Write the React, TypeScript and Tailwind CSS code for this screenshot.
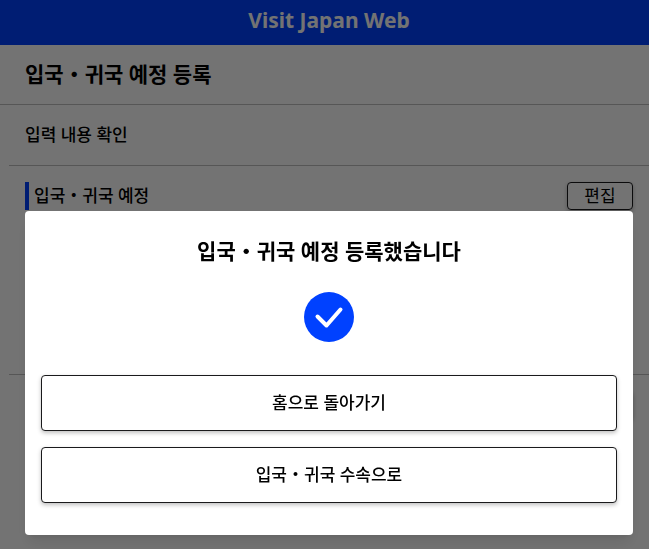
import type { ReactNode } from "react";

const ACTIONS = ["홈으로 돌아가기", "입국・귀국 수속으로"];

function CheckIcon() {
  return (
    <svg viewBox="0 0 50 50" className="size-[50px]" aria-hidden="true">
      <circle cx="25" cy="25" r="25" fill="#0041ff" />
      <path
        d="M13.5 24.5 22.5 33.5 36.5 17.5"
        fill="none"
        stroke="#fff"
        strokeWidth="4"
        strokeLinecap="round"
        strokeLinejoin="round"
      />
    </svg>
  );
}

function EditButton() {
  return (
    <button
      type="button"
      className="h-7 w-[66px] rounded border border-[#1a1a1c] text-[17px] leading-6 shadow-[0_2px_4px_rgba(0,0,0,0.25)]"
    >
      편집
    </button>
  );
}

function ActionButton({ children }: { children: ReactNode }) {
  return (
    <button
      type="button"
      className="h-14 w-full rounded border border-[#1a1a1c] bg-white text-[17px] font-medium shadow-[0_2px_4px_rgba(0,0,0,0.25)]"
    >
      {children}
    </button>
  );
}

function CompleteDialog() {
  return (
    <div className="fixed inset-0 flex items-end bg-black/55 pr-4 pb-[14px] pl-[25px]">
      <div
        role="dialog"
        aria-modal="true"
        aria-labelledby="dialog-title"
        className="flex w-full flex-col items-center rounded bg-white px-4 pt-6 pb-8 shadow-lg"
      >
        <h2 id="dialog-title" className="text-[21px] leading-8 font-bold">
          입국・귀국 예정 등록했습니다
        </h2>
        <div className="pt-[25px] pb-[33px]">
          <CheckIcon />
        </div>
        <div className="flex w-full flex-col gap-4">
          {ACTIONS.map((label) => (
            <ActionButton key={label}>{label}</ActionButton>
          ))}
        </div>
      </div>
    </div>
  );
}

export default function App() {
  return (
    <div className="min-h-screen bg-white font-['Noto_Sans','Noto_Sans_CJK_KR',sans-serif] text-black">
      <header className="flex h-[45px] items-center justify-center bg-[#0041ff] pb-1 pl-[9px] text-[21px] font-bold text-white">
        Visit Japan Web
      </header>
      <h1 className="border-b border-[#bfbfbf] px-[25px] pt-[13px] pb-[14px] text-[21px] leading-8 font-bold">
        입국・귀국 예정 등록
      </h1>
      <main className="pl-[9px]">
        <h2 className="border-b border-[#bfbfbf] px-4 py-[18px] text-[17px] leading-6 font-medium">
          입력 내용 확인
        </h2>
        <section className="h-[209px] border-b border-[#bfbfbf] px-4 pt-4">
          <div className="flex h-7 items-center justify-between">
            <h3 className="border-l-4 border-[#0041ff] pl-[5px] text-[17px] leading-7 font-medium">
              입국・귀국 예정
            </h3>
            <EditButton />
          </div>
        </section>
        <section className="flex justify-end px-4 pt-4">
          <EditButton />
        </section>
      </main>
      <CompleteDialog />
    </div>
  );
}
